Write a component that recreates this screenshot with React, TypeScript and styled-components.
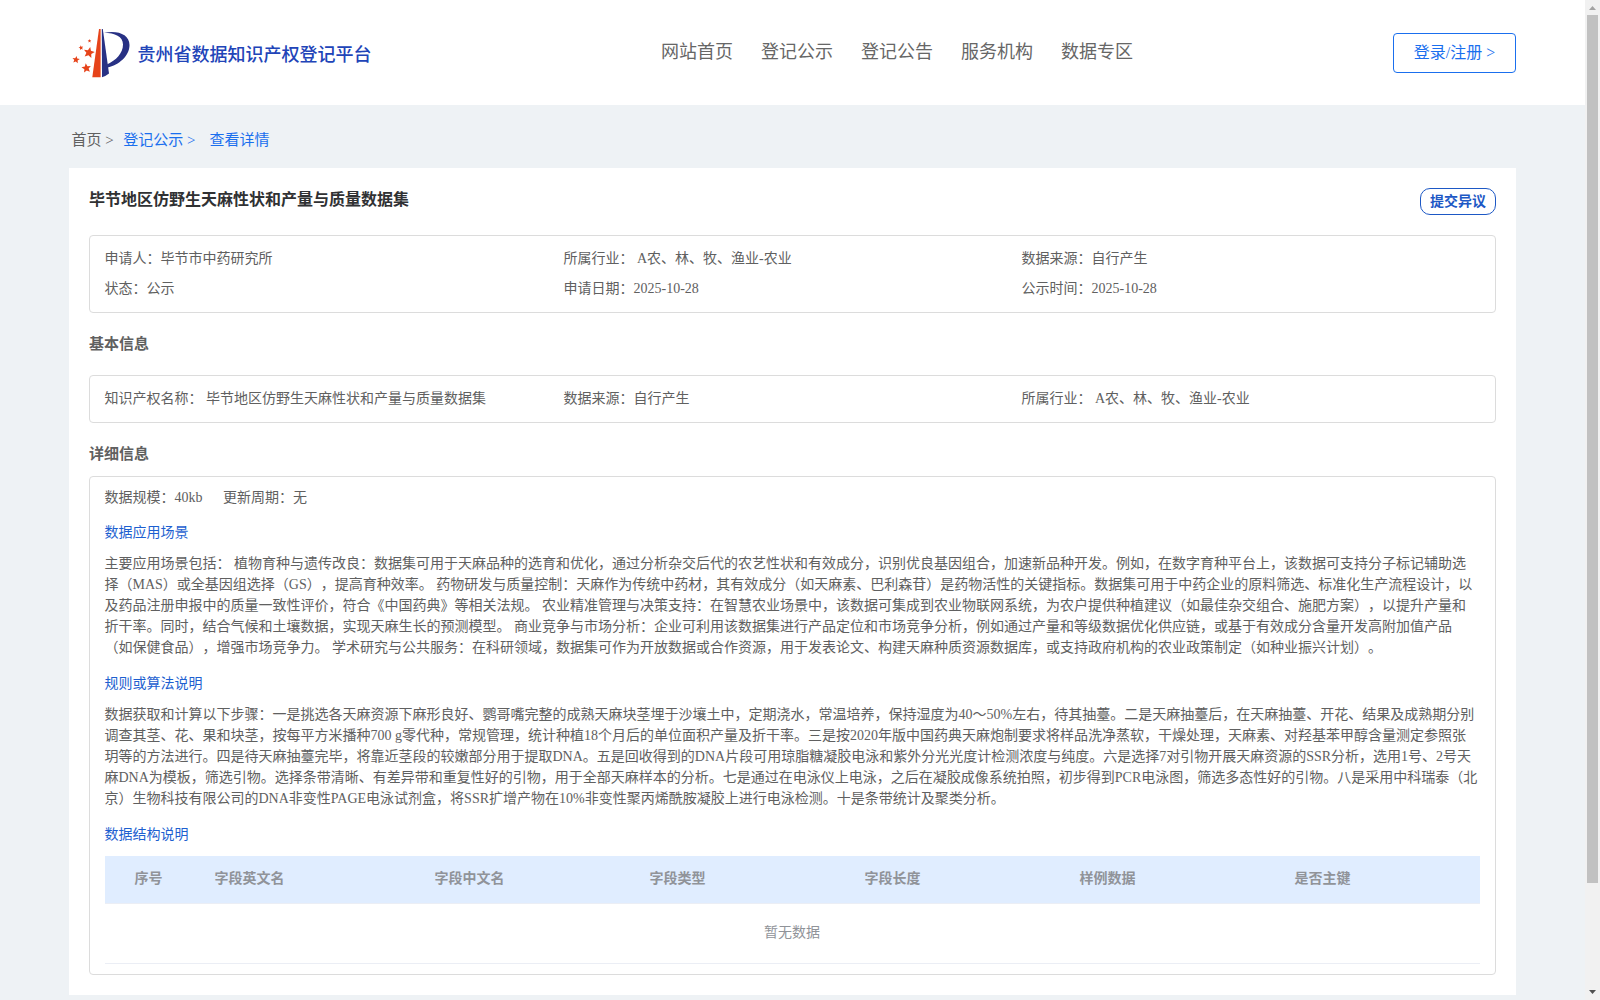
import React from 'react';
import styled, { createGlobalStyle } from 'styled-components';

const Global = createGlobalStyle`
  * { box-sizing: border-box; }
  html, body { margin: 0; padding: 0; }
  body {
    background: #eef2f5; color: #606060; overflow: hidden;
    font-family: "Liberation Serif", "Noto Sans CJK SC", serif;
    font-size: 14px; line-height: 21px; text-spacing-trim: space-all;
  }
`;
const Screen = styled.div`display: flex; width: 1600px; height: 1000px; overflow: hidden;`;
const Main = styled.div`width: 1585px; height: 1000px; overflow: hidden;`;
const Header = styled.header`
  height: 105px; background: #fff; display: flex; align-items: flex-start;
  justify-content: space-between; padding: 0 69px 0 71px;
`;
const Brand = styled.div`display: flex; width: 590px; padding-top: 26px;`;
const Logo = styled.svg`width: 60px; height: 54px; flex: none;`;
const BrandName = styled.div`
  margin: 16px 0 0 6.5px; font-size: 18px; line-height: 26px; font-weight: 500; color: #2144b8; white-space: nowrap;
`;
const Nav = styled.nav`display: flex; gap: 28px; padding-top: 39px; flex: 1;`;
const NavLink = styled.a`font-size: 18px; line-height: 26px; color: #666; white-space: nowrap;`;
const Login = styled.button`
  width: 123px; height: 40px; margin-top: 33px; padding: 0; border: 1px solid #1a6fee; border-radius: 4px;
  background: #fff; color: #1a6fee; font: 16px/36px "Liberation Serif", "Noto Sans CJK SC", serif;
`;
const Crumbs = styled.div`
  display: flex; padding: 24px 0 0 71.5px; height: 63px; font-size: 15px; line-height: 22px;
`;
const Crumb = styled.span<{ $active?: boolean; $gap?: number }>`
  color: ${p => (p.$active ? '#1a6fee' : '#606060')}; margin-right: ${p => p.$gap ?? 0}px; white-space: pre;
`;
const Card = styled.main`width: 1447px; height: 827px; margin-left: 69px; padding: 0 20px; background: #fff;`;
const TitleRow = styled.div`display: flex; justify-content: space-between; padding-top: 20px; height: 67px;`;
const Title = styled.h1`margin: 1px 0 0; font-size: 16px; line-height: 22px; font-weight: 700; color: #303133;`;
const Objection = styled.button`
  width: 76px; height: 27px; padding: 0; border: 1px solid #1d58c5; border-radius: 10px; background: #fff;
  color: #1d58c5; font: 700 14px/22px "Liberation Serif", "Noto Sans CJK SC", serif;
`;
const Panel = styled.section<{ $h: number; $top: number }>`
  height: ${p => p.$h}px; padding: ${p => p.$top}px 15px 0 14.5px; border: 1px solid #dcdcdc; border-radius: 4px;
`;
const Grid = styled.div`display: grid; grid-template-columns: 459px 458px 1fr; grid-auto-rows: 30px; line-height: 22px;`;
const Cell = styled.div`white-space: pre;`;
const Heading = styled.h2<{ $h: number; $top: number }>`
  margin: 0; height: ${p => p.$h}px; padding-top: ${p => p.$top}px;
  font-size: 15px; line-height: 22px; font-weight: 700; color: #606060;
`;
const Scale = styled.div`display: flex; gap: 20.5px; height: 31px;`;
const SubHeading = styled.h3<{ $mt?: number; $mb: number }>`
  margin: ${p => p.$mt ?? 0}px 0 ${p => p.$mb}px; font-size: 14px; line-height: 21px; font-weight: 400; color: #1d5fd0;
`;
const Paragraph = styled.p`margin: 0;`;
const Line = styled.span`display: block; height: 21px; white-space: pre;`;
const TableHead = styled.div`
  display: grid; grid-template-columns: 110px 220px 215px 215px 215px 215px 1fr;
  width: 1375px; height: 48px; background: #e0edff; color: #909399; font-weight: 700; line-height: 46px;
  border-bottom: 1px solid #ebeef5;
`;
const HeadCell = styled.div<{ $first?: boolean }>`padding-left: ${p => (p.$first ? 30 : 0)}px;`;
const Empty = styled.div`
  width: 1375px; height: 60px; line-height: 58px; text-align: center; color: #909399; border-bottom: 1px solid #ebeef5;
`;
const Scrollbar = styled.div`
  width: 15px; height: 1000px; background: #f1f1f1; display: flex; flex-direction: column; align-items: center;
`;
const Thumb = styled.div`width: 11px; height: 868px; margin-bottom: auto; background: #c1c1c1;`;
const Arrow = styled.svg`width: 15px; height: 15px; display: block; flex: none;`;

const scene = [
  '主要应用场景包括： 植物育种与遗传改良：数据集可用于天麻品种的选育和优化，通过分析杂交后代的农艺性状和有效成分，识别优良基因组合，加速新品种开发。例如，在数字育种平台上，该数据可支持分子标记辅助选',
  '择（MAS）或全基因组选择（GS），提高育种效率。 药物研发与质量控制：天麻作为传统中药材，其有效成分（如天麻素、巴利森苷）是药物活性的关键指标。数据集可用于中药企业的原料筛选、标准化生产流程设计，以',
  '及药品注册申报中的质量一致性评价，符合《中国药典》等相关法规。 农业精准管理与决策支持：在智慧农业场景中，该数据可集成到农业物联网系统，为农户提供种植建议（如最佳杂交组合、施肥方案），以提升产量和',
  '折干率。同时，结合气候和土壤数据，实现天麻生长的预测模型。 商业竞争与市场分析：企业可利用该数据集进行产品定位和市场竞争分析，例如通过产量和等级数据优化供应链，或基于有效成分含量开发高附加值产品',
  '（如保健食品），增强市场竞争力。 学术研究与公共服务：在科研领域，数据集可作为开放数据或合作资源，用于发表论文、构建天麻种质资源数据库，或支持政府机构的农业政策制定（如种业振兴计划）。',
];
const rules = [
  '数据获取和计算以下步骤：一是挑选各天麻资源下麻形良好、鹦哥嘴完整的成熟天麻块茎埋于沙壤土中，定期浇水，常温培养，保持湿度为40～50%左右，待其抽薹。二是天麻抽薹后，在天麻抽薹、开花、结果及成熟期分别',
  '调查其茎、花、果和块茎，按每平方米播种700 g零代种，常规管理，统计种植18个月后的单位面积产量及折干率。三是按2020年版中国药典天麻炮制要求将样品洗净蒸软，干燥处理，天麻素、对羟基苯甲醇含量测定参照张',
  '玥等的方法进行。四是待天麻抽薹完毕，将靠近茎段的较嫩部分用于提取DNA。五是回收得到的DNA片段可用琼脂糖凝胶电泳和紫外分光光度计检测浓度与纯度。六是选择7对引物开展天麻资源的SSR分析，选用1号、2号天',
  '麻DNA为模板，筛选引物。选择条带清晰、有差异带和重复性好的引物，用于全部天麻样本的分析。七是通过在电泳仪上电泳，之后在凝胶成像系统拍照，初步得到PCR电泳图，筛选多态性好的引物。八是采用中科瑞泰（北',
  '京）生物科技有限公司的DNA非变性PAGE电泳试剂盒，将SSR扩增产物在10%非变性聚丙烯酰胺凝胶上进行电泳检测。十是条带统计及聚类分析。',
];
const summary = [
  '申请人：毕节市中药研究所', '所属行业： A农、林、牧、渔业-农业', '数据来源：自行产生',
  '状态：公示', '申请日期：2025-10-28', '公示时间：2025-10-28',
];
const basics = ['知识产权名称： 毕节地区仿野生天麻性状和产量与质量数据集', '数据来源：自行产生', '所属行业： A农、林、牧、渔业-农业'];
const columns = ['序号', '字段英文名', '字段中文名', '字段类型', '字段长度', '样例数据', '是否主键'];
const navItems = ['网站首页', '登记公示', '登记公告', '服务机构', '数据专区'];

const star = (cx: number, cy: number, r: number, turn = 0) =>
  Array.from({ length: 10 }, (_, i) => {
    const a = ((i * 36 - 90 + turn) * Math.PI) / 180;
    const d = i % 2 ? r * 0.45 : r;
    return `${(cx + d * Math.cos(a)).toFixed(2)},${(cy + d * Math.sin(a)).toFixed(2)}`;
  }).join(' ');

export default function App() {
  return (
    <>
      <Global />
      <Screen>
        <Main>
          <Header>
            <Brand>
              <Logo viewBox="0 0 60 54">
                <g fill="#e6431a">
                  <path d="M28 3H29.6V51.2H21.3Z" />
                  <polygon points={star(18, 26.6, 5.8, 12)} />
                  <polygon points={star(5, 33.8, 3.9, 8)} />
                  <polygon points={star(15.4, 42.2, 5, -8)} />
                  <polygon points={star(10, 21.8, 2.5, -12)} />
                  <polygon points={star(18.5, 15, 1.9)} />
                </g>
                <g fill="#283184">
                  <path d="M30.8 3H31.8L38 47.5Q35 50 31 51.2Z" />
                  <path d="M33 6.8C47 4 58.5 8.5 58.5 19C58.5 30 48 39 36.5 41.5L36 38.4C45 34.5 52 27 52 18.5C52 10.5 44 7 33 6.8Z" />
                </g>
              </Logo>
              <BrandName>贵州省数据知识产权登记平台</BrandName>
            </Brand>
            <Nav>{navItems.map(n => <NavLink key={n}>{n}</NavLink>)}</Nav>
            <Login>登录/注册 &gt;</Login>
          </Header>
          <Crumbs>
            <Crumb $gap={9.5}>首页 &gt;</Crumb>
            <Crumb $active $gap={14}>登记公示 &gt;</Crumb>
            <Crumb $active>查看详情</Crumb>
          </Crumbs>
          <Card>
            <TitleRow>
              <Title>毕节地区仿野生天麻性状和产量与质量数据集</Title>
              <Objection>提交异议</Objection>
            </TitleRow>
            <Panel $h={78} $top={12}>
              <Grid>{summary.map(s => <Cell key={s}>{s}</Cell>)}</Grid>
            </Panel>
            <Heading $h={62} $top={20}>基本信息</Heading>
            <Panel $h={48} $top={12}>
              <Grid>{basics.map(s => <Cell key={s}>{s}</Cell>)}</Grid>
            </Panel>
            <Heading $h={53} $top={20}>详细信息</Heading>
            <Panel $h={499} $top={10}>
              <Scale><span>数据规模：40kb</span><span>更新周期：无</span></Scale>
              <SubHeading $mt={4} $mb={10}>数据应用场景</SubHeading>
              <Paragraph>{scene.map(l => <Line key={l}>{l}</Line>)}</Paragraph>
              <SubHeading $mt={15} $mb={10}>规则或算法说明</SubHeading>
              <Paragraph>{rules.map(l => <Line key={l}>{l}</Line>)}</Paragraph>
              <SubHeading $mt={15} $mb={11}>数据结构说明</SubHeading>
              <TableHead>{columns.map((c, i) => <HeadCell key={c} $first={i === 0}>{c}</HeadCell>)}</TableHead>
              <Empty>暂无数据</Empty>
            </Panel>
          </Card>
        </Main>
        <Scrollbar>
          <Arrow viewBox="0 0 15 15"><path d="M4 10L7.5 6L11 10Z" fill="#a3a3a3" /></Arrow>
          <Thumb />
          <Arrow viewBox="0 0 15 15"><path d="M4 5L7.5 9L11 5Z" fill="#505050" /></Arrow>
        </Scrollbar>
      </Screen>
    </>
  );
}
